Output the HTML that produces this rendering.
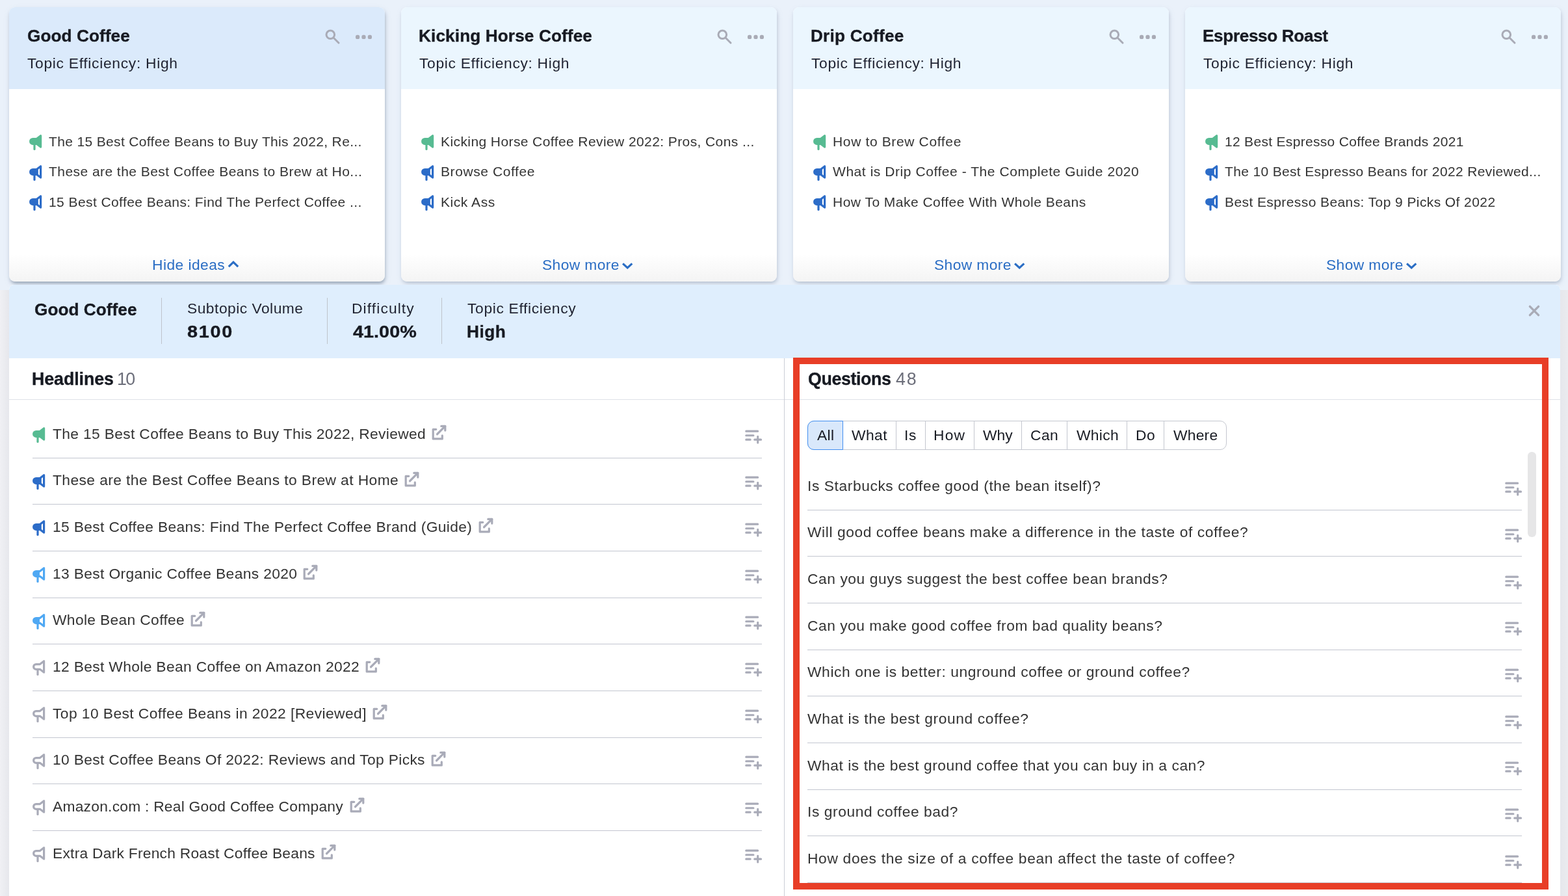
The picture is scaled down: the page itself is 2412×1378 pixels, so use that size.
<!DOCTYPE html>
<html lang="en">
<head>
<meta charset="utf-8">
<title>Topic Research – Good Coffee</title>
<style>
*{box-sizing:border-box;margin:0;padding:0}
html,body{width:2412px;height:1378px;overflow:hidden}
body{position:relative;background:#eaf1fa;font-family:"Liberation Sans",Arial,Helvetica,sans-serif;color:#2d2f38}
ul{list-style:none}
a{text-decoration:none}
.t{position:absolute;white-space:nowrap;line-height:1;font-weight:400;will-change:transform}
.ic{position:absolute;display:block;overflow:visible}
.b{font-weight:700;color:#171a22;-webkit-text-stroke:.35px #171a22}
.pagebg{position:absolute;left:0;top:445.5px;width:2412px;height:932.5px;background:linear-gradient(90deg,#f0f0f4 0,#e6e7ec 14px,#e6e7ec 2400px,#eaebef 2412px)}
.card{position:absolute;top:11px;width:577.6px;height:422px;border-radius:9px;background:linear-gradient(180deg,#fff 0,#fff 90%,#f4f4f4 100%);box-shadow:1px 3px 5px -1px rgba(96,113,138,.30),1px 4px 12px -2px rgba(110,130,160,.20)}
.card.sel{box-shadow:1px 4px 5px -1px rgba(80,100,125,.45),1px 4px 12px -2px rgba(110,130,160,.22)}
.card-head{position:absolute;left:0;top:0;width:100%;height:126px;background:#ebf6fe;border-radius:9px 9px 0 0}
.card.sel .card-head{background:#dbeafb}
.link{color:#2a6dc4}
.panel{position:absolute;left:14px;top:438px;width:2386px;height:940px;background:#fff;border-radius:7px 7px 0 0;overflow:hidden}
.panel-head{position:absolute;left:0;top:0;width:100%;height:112.5px;background:#dfeefd;border-radius:7px 7px 0 0}
.vd{position:absolute;top:19.5px;width:1.4px;height:71px;background:#bfc3cb}
.hline{position:absolute;left:0;top:175.7px;width:100%;height:1.2px;background:#dfe1e8}
.colsep{position:absolute;left:1191.6px;top:112.5px;width:1.2px;height:827.5px;background:#cbced6}
.sep{position:absolute;height:1px;background:#c3c6d0}
.tabs{position:absolute;left:1228px;top:209.3px;height:44.4px;width:644.8px;border:1.2px solid #c4c7cf;border-radius:10px;background:#fff}
.tab{position:absolute;top:-1.2px;height:44.4px;border-left:1.2px solid #c4c7cf}
.tab.on{background:#d9e8fb;border:1.3px solid #428ff0;border-radius:10px 0 0 10px;z-index:2}
.tab .t{color:#171a22}
.scroll{position:absolute;left:2336px;top:257px;width:12.5px;height:131px;border-radius:6.25px;background:#e6e6e7}
.hl{position:absolute;left:1206px;top:112px;width:1162px;height:818px;border:10px solid #e83e27;pointer-events:none}
</style>
</head>
<body>
<div class="pagebg"></div>

<section class="cards">
<article class="card sel" style="left:14px">
<header class="card-head">
<h3 class="t b" style="left:28.36px;top:31px;font-size:26.2px;letter-spacing:0.060px;">Good Coffee</h3>
<span class="t" style="left:28.28px;top:75px;font-size:22.8px;letter-spacing:0.700px;color:#1f2230;">Topic Efficiency: High</span>
<svg class="ic" style="left:486.30px;top:34.40px" width="24" height="24" viewBox="0 0 24 24" fill="none" stroke="#a9abb6" stroke-width="3" stroke-linecap="round"><circle cx="8.3" cy="8.3" r="6.3"/><path d="M13 13 L21 21"/></svg>
<svg class="ic" style="left:532.80px;top:42.10px" width="26" height="8" viewBox="0 0 26 8" fill="#a9abb6"><rect x="0" y="0.8" width="6.2" height="6.2" rx="2.6"/><rect x="9.4" y="0.8" width="6.2" height="6.2" rx="2.6"/><rect x="18.8" y="0.8" width="6.2" height="6.2" rx="2.6"/></svg>
</header>
<ul>
<li><svg class="ic" style="left:30.70px;top:196.10px" width="20" height="25" viewBox="0 0 20 25" stroke="#57bb92" stroke-width="3.2" stroke-linejoin="round" stroke-linecap="round"><path d="M11.4 6.6 L17.6 1.8 L17.6 19.1 L11.4 14.3 L5.5 14.3 A3.85 3.85 0 0 1 5.5 6.6 Z" fill="#57bb92"/><path d="M8 14.6 V22.5" fill="none"/></svg><span class="t" style="left:61.40px;top:196px;font-size:21.0px;letter-spacing:0.348px;color:#333;">The 15 Best Coffee Beans to Buy This 2022, Re...</span></li>
<li><svg class="ic" style="left:30.70px;top:242.60px" width="20" height="25" viewBox="0 0 20 25" stroke="#2c6cc8" stroke-width="3.2" stroke-linejoin="round" stroke-linecap="round"><path d="M11.4 6.6 L17.6 1.8 L17.6 19.1 L11.4 14.3 L5.5 14.3 A3.85 3.85 0 0 1 5.5 6.6 Z" fill="none"/><path d="M5.5 6.6 H11.4 L13.8 4.8 V16.1 L11.4 14.3 H5.5 A3.85 3.85 0 0 1 5.5 6.6 Z" fill="#2c6cc8" stroke="none"/><path d="M8 14.6 V22.5" fill="none"/></svg><span class="t" style="left:61.40px;top:242px;font-size:21.0px;letter-spacing:0.448px;color:#333;">These are the Best Coffee Beans to Brew at Ho...</span></li>
<li><svg class="ic" style="left:30.70px;top:289.20px" width="20" height="25" viewBox="0 0 20 25" stroke="#2c6cc8" stroke-width="3.2" stroke-linejoin="round" stroke-linecap="round"><path d="M11.4 6.6 L17.6 1.8 L17.6 19.1 L11.4 14.3 L5.5 14.3 A3.85 3.85 0 0 1 5.5 6.6 Z" fill="none"/><path d="M5.5 6.6 H11.4 L13.8 4.8 V16.1 L11.4 14.3 H5.5 A3.85 3.85 0 0 1 5.5 6.6 Z" fill="#2c6cc8" stroke="none"/><path d="M8 14.6 V22.5" fill="none"/></svg><span class="t" style="left:61.40px;top:289px;font-size:21.0px;letter-spacing:0.420px;color:#333;">15 Best Coffee Beans: Find The Perfect Coffee ...</span></li>
</ul>
<a class="t link" style="left:220.00px;top:385px;font-size:22.8px;letter-spacing:0.444px;">Hide ideas</a>
<svg class="ic" style="left:336.00px;top:389.00px" width="18" height="13" viewBox="0 0 18 13" fill="none" stroke="#2a6dc4" stroke-width="3.2" stroke-linecap="butt" stroke-linejoin="miter"><path d="M1.8 10.1 L8.97 3.2 L16.15 10.1"/></svg>
</article>
<article class="card" style="left:617px">
<header class="card-head">
<h3 class="t b" style="left:26.86px;top:31px;font-size:26.2px;letter-spacing:0.108px;">Kicking Horse Coffee</h3>
<span class="t" style="left:28.28px;top:75px;font-size:22.8px;letter-spacing:0.681px;color:#1f2230;">Topic Efficiency: High</span>
<svg class="ic" style="left:486.30px;top:34.40px" width="24" height="24" viewBox="0 0 24 24" fill="none" stroke="#a9abb6" stroke-width="3" stroke-linecap="round"><circle cx="8.3" cy="8.3" r="6.3"/><path d="M13 13 L21 21"/></svg>
<svg class="ic" style="left:532.80px;top:42.10px" width="26" height="8" viewBox="0 0 26 8" fill="#a9abb6"><rect x="0" y="0.8" width="6.2" height="6.2" rx="2.6"/><rect x="9.4" y="0.8" width="6.2" height="6.2" rx="2.6"/><rect x="18.8" y="0.8" width="6.2" height="6.2" rx="2.6"/></svg>
</header>
<ul>
<li><svg class="ic" style="left:30.70px;top:196.10px" width="20" height="25" viewBox="0 0 20 25" stroke="#57bb92" stroke-width="3.2" stroke-linejoin="round" stroke-linecap="round"><path d="M11.4 6.6 L17.6 1.8 L17.6 19.1 L11.4 14.3 L5.5 14.3 A3.85 3.85 0 0 1 5.5 6.6 Z" fill="#57bb92"/><path d="M8 14.6 V22.5" fill="none"/></svg><span class="t" style="left:61.40px;top:196px;font-size:21.0px;letter-spacing:0.410px;color:#333;">Kicking Horse Coffee Review 2022: Pros, Cons ...</span></li>
<li><svg class="ic" style="left:30.70px;top:242.60px" width="20" height="25" viewBox="0 0 20 25" stroke="#2c6cc8" stroke-width="3.2" stroke-linejoin="round" stroke-linecap="round"><path d="M11.4 6.6 L17.6 1.8 L17.6 19.1 L11.4 14.3 L5.5 14.3 A3.85 3.85 0 0 1 5.5 6.6 Z" fill="none"/><path d="M5.5 6.6 H11.4 L13.8 4.8 V16.1 L11.4 14.3 H5.5 A3.85 3.85 0 0 1 5.5 6.6 Z" fill="#2c6cc8" stroke="none"/><path d="M8 14.6 V22.5" fill="none"/></svg><span class="t" style="left:61.40px;top:242px;font-size:21.0px;letter-spacing:0.581px;color:#333;">Browse Coffee</span></li>
<li><svg class="ic" style="left:30.70px;top:289.20px" width="20" height="25" viewBox="0 0 20 25" stroke="#2c6cc8" stroke-width="3.2" stroke-linejoin="round" stroke-linecap="round"><path d="M11.4 6.6 L17.6 1.8 L17.6 19.1 L11.4 14.3 L5.5 14.3 A3.85 3.85 0 0 1 5.5 6.6 Z" fill="none"/><path d="M5.5 6.6 H11.4 L13.8 4.8 V16.1 L11.4 14.3 H5.5 A3.85 3.85 0 0 1 5.5 6.6 Z" fill="#2c6cc8" stroke="none"/><path d="M8 14.6 V22.5" fill="none"/></svg><span class="t" style="left:61.40px;top:289px;font-size:21.0px;letter-spacing:0.547px;color:#333;">Kick Ass</span></li>
</ul>
<a class="t link" style="left:217.08px;top:385px;font-size:22.8px;letter-spacing:0.396px;">Show more</a>
<svg class="ic" style="left:338.70px;top:392.00px" width="18" height="13" viewBox="0 0 18 13" fill="none" stroke="#2a6dc4" stroke-width="3.2" stroke-linecap="butt" stroke-linejoin="miter"><path d="M2.1 2.4 L9.2 8.9 L16.3 2.4"/></svg>
</article>
<article class="card" style="left:1220px">
<header class="card-head">
<h3 class="t b" style="left:26.86px;top:31px;font-size:26.2px;letter-spacing:0.209px;">Drip Coffee</h3>
<span class="t" style="left:28.28px;top:75px;font-size:22.8px;letter-spacing:0.681px;color:#1f2230;">Topic Efficiency: High</span>
<svg class="ic" style="left:486.30px;top:34.40px" width="24" height="24" viewBox="0 0 24 24" fill="none" stroke="#a9abb6" stroke-width="3" stroke-linecap="round"><circle cx="8.3" cy="8.3" r="6.3"/><path d="M13 13 L21 21"/></svg>
<svg class="ic" style="left:532.80px;top:42.10px" width="26" height="8" viewBox="0 0 26 8" fill="#a9abb6"><rect x="0" y="0.8" width="6.2" height="6.2" rx="2.6"/><rect x="9.4" y="0.8" width="6.2" height="6.2" rx="2.6"/><rect x="18.8" y="0.8" width="6.2" height="6.2" rx="2.6"/></svg>
</header>
<ul>
<li><svg class="ic" style="left:30.70px;top:196.10px" width="20" height="25" viewBox="0 0 20 25" stroke="#57bb92" stroke-width="3.2" stroke-linejoin="round" stroke-linecap="round"><path d="M11.4 6.6 L17.6 1.8 L17.6 19.1 L11.4 14.3 L5.5 14.3 A3.85 3.85 0 0 1 5.5 6.6 Z" fill="#57bb92"/><path d="M8 14.6 V22.5" fill="none"/></svg><span class="t" style="left:61.40px;top:196px;font-size:21.0px;letter-spacing:0.646px;color:#333;">How to Brew Coffee</span></li>
<li><svg class="ic" style="left:30.70px;top:242.60px" width="20" height="25" viewBox="0 0 20 25" stroke="#2c6cc8" stroke-width="3.2" stroke-linejoin="round" stroke-linecap="round"><path d="M11.4 6.6 L17.6 1.8 L17.6 19.1 L11.4 14.3 L5.5 14.3 A3.85 3.85 0 0 1 5.5 6.6 Z" fill="none"/><path d="M5.5 6.6 H11.4 L13.8 4.8 V16.1 L11.4 14.3 H5.5 A3.85 3.85 0 0 1 5.5 6.6 Z" fill="#2c6cc8" stroke="none"/><path d="M8 14.6 V22.5" fill="none"/></svg><span class="t" style="left:61.40px;top:242px;font-size:21.0px;letter-spacing:0.557px;color:#333;">What is Drip Coffee - The Complete Guide 2020</span></li>
<li><svg class="ic" style="left:30.70px;top:289.20px" width="20" height="25" viewBox="0 0 20 25" stroke="#2c6cc8" stroke-width="3.2" stroke-linejoin="round" stroke-linecap="round"><path d="M11.4 6.6 L17.6 1.8 L17.6 19.1 L11.4 14.3 L5.5 14.3 A3.85 3.85 0 0 1 5.5 6.6 Z" fill="none"/><path d="M5.5 6.6 H11.4 L13.8 4.8 V16.1 L11.4 14.3 H5.5 A3.85 3.85 0 0 1 5.5 6.6 Z" fill="#2c6cc8" stroke="none"/><path d="M8 14.6 V22.5" fill="none"/></svg><span class="t" style="left:61.40px;top:289px;font-size:21.0px;letter-spacing:0.483px;color:#333;">How To Make Coffee With Whole Beans</span></li>
</ul>
<a class="t link" style="left:217.16px;top:385px;font-size:22.8px;letter-spacing:0.390px;">Show more</a>
<svg class="ic" style="left:338.70px;top:392.00px" width="18" height="13" viewBox="0 0 18 13" fill="none" stroke="#2a6dc4" stroke-width="3.2" stroke-linecap="butt" stroke-linejoin="miter"><path d="M2.1 2.4 L9.2 8.9 L16.3 2.4"/></svg>
</article>
<article class="card" style="left:1823px">
<header class="card-head">
<h3 class="t b" style="left:27.26px;top:31px;font-size:26.2px;letter-spacing:-0.375px;">Espresso Roast</h3>
<span class="t" style="left:28.28px;top:75px;font-size:22.8px;letter-spacing:0.681px;color:#1f2230;">Topic Efficiency: High</span>
<svg class="ic" style="left:486.30px;top:34.40px" width="24" height="24" viewBox="0 0 24 24" fill="none" stroke="#a9abb6" stroke-width="3" stroke-linecap="round"><circle cx="8.3" cy="8.3" r="6.3"/><path d="M13 13 L21 21"/></svg>
<svg class="ic" style="left:532.80px;top:42.10px" width="26" height="8" viewBox="0 0 26 8" fill="#a9abb6"><rect x="0" y="0.8" width="6.2" height="6.2" rx="2.6"/><rect x="9.4" y="0.8" width="6.2" height="6.2" rx="2.6"/><rect x="18.8" y="0.8" width="6.2" height="6.2" rx="2.6"/></svg>
</header>
<ul>
<li><svg class="ic" style="left:30.70px;top:196.10px" width="20" height="25" viewBox="0 0 20 25" stroke="#57bb92" stroke-width="3.2" stroke-linejoin="round" stroke-linecap="round"><path d="M11.4 6.6 L17.6 1.8 L17.6 19.1 L11.4 14.3 L5.5 14.3 A3.85 3.85 0 0 1 5.5 6.6 Z" fill="#57bb92"/><path d="M8 14.6 V22.5" fill="none"/></svg><span class="t" style="left:61.40px;top:196px;font-size:21.0px;letter-spacing:0.309px;color:#333;">12 Best Espresso Coffee Brands 2021</span></li>
<li><svg class="ic" style="left:30.70px;top:242.60px" width="20" height="25" viewBox="0 0 20 25" stroke="#2c6cc8" stroke-width="3.2" stroke-linejoin="round" stroke-linecap="round"><path d="M11.4 6.6 L17.6 1.8 L17.6 19.1 L11.4 14.3 L5.5 14.3 A3.85 3.85 0 0 1 5.5 6.6 Z" fill="none"/><path d="M5.5 6.6 H11.4 L13.8 4.8 V16.1 L11.4 14.3 H5.5 A3.85 3.85 0 0 1 5.5 6.6 Z" fill="#2c6cc8" stroke="none"/><path d="M8 14.6 V22.5" fill="none"/></svg><span class="t" style="left:61.40px;top:242px;font-size:21.0px;letter-spacing:0.345px;color:#333;">The 10 Best Espresso Beans for 2022 Reviewed...</span></li>
<li><svg class="ic" style="left:30.70px;top:289.20px" width="20" height="25" viewBox="0 0 20 25" stroke="#2c6cc8" stroke-width="3.2" stroke-linejoin="round" stroke-linecap="round"><path d="M11.4 6.6 L17.6 1.8 L17.6 19.1 L11.4 14.3 L5.5 14.3 A3.85 3.85 0 0 1 5.5 6.6 Z" fill="none"/><path d="M5.5 6.6 H11.4 L13.8 4.8 V16.1 L11.4 14.3 H5.5 A3.85 3.85 0 0 1 5.5 6.6 Z" fill="#2c6cc8" stroke="none"/><path d="M8 14.6 V22.5" fill="none"/></svg><span class="t" style="left:61.40px;top:289px;font-size:21.0px;letter-spacing:0.412px;color:#333;">Best Espresso Beans: Top 9 Picks Of 2022</span></li>
</ul>
<a class="t link" style="left:217.08px;top:385px;font-size:22.8px;letter-spacing:0.396px;">Show more</a>
<svg class="ic" style="left:338.70px;top:392.00px" width="18" height="13" viewBox="0 0 18 13" fill="none" stroke="#2a6dc4" stroke-width="3.2" stroke-linecap="butt" stroke-linejoin="miter"><path d="M2.1 2.4 L9.2 8.9 L16.3 2.4"/></svg>
</article>
</section>
<section class="panel">
<header class="panel-head">
<h2 class="t b" style="left:39.44px;top:25px;font-size:26.2px;letter-spacing:0.041px;">Good Coffee</h2>
<i class="vd" style="left:233.5px"></i>
<i class="vd" style="left:488.7px"></i>
<i class="vd" style="left:665.1px"></i>
<span class="t" style="left:273.60px;top:25px;font-size:22.8px;letter-spacing:0.495px;color:#1f2230;">Subtopic Volume</span>
<span class="t b" style="left:273.66px;top:59px;font-size:26.2px;letter-spacing:1.576px;transform:scaleX(1.1);transform-origin:0 0;">8100</span>
<span class="t" style="left:527.16px;top:25px;font-size:22.8px;letter-spacing:1.106px;color:#1f2230;">Difficulty</span>
<span class="t b" style="left:529.14px;top:59px;font-size:26.2px;letter-spacing:0.014px;transform:scaleX(1.1);transform-origin:0 0;">41.00%</span>
<span class="t" style="left:705.28px;top:25px;font-size:22.8px;letter-spacing:0.660px;color:#1f2230;">Topic Efficiency</span>
<span class="t b" style="left:704.12px;top:59px;font-size:26.2px;letter-spacing:0.517px;">High</span>
<svg class="ic" style="left:2337.2px;top:31px" width="18" height="18" viewBox="0 0 18 18" fill="none" stroke="#a9abb6" stroke-width="3.4" stroke-linecap="round"><path d="M2.4 2.4 L15.6 15.6 M15.6 2.4 L2.4 15.6"/></svg>
</header>
<div class="col col-headlines">
<h3 class="t b" style="left:35.08px;top:132px;font-size:26.8px;letter-spacing:-0.085px;">Headlines</h3>
<span class="t" style="left:165.91px;top:132px;font-size:26.8px;letter-spacing:-1.743px;color:#6c6e7a;">10</span>
<ul>
<li><svg class="ic" style="left:35.90px;top:218.90px" width="20" height="25" viewBox="0 0 20 25" stroke="#57bb92" stroke-width="3.2" stroke-linejoin="round" stroke-linecap="round"><path d="M11.4 6.6 L17.6 1.8 L17.6 19.1 L11.4 14.3 L5.5 14.3 A3.85 3.85 0 0 1 5.5 6.6 Z" fill="#57bb92"/><path d="M8 14.6 V22.5" fill="none"/></svg><span class="t" style="left:66.50px;top:218px;font-size:22.8px;letter-spacing:0.340px;color:#333;">The 15 Best Coffee Beans to Buy This 2022, Reviewed</span><svg class="ic" style="left:649.70px;top:215.05px" width="24" height="24" viewBox="0 0 24 24" fill="none" stroke="#a9abb8" stroke-width="3.2" stroke-linecap="round" stroke-linejoin="round"><path d="M6.8 7.3 H2.2 V21.9 H16.3 V16.9"/><path d="M8.5 14.75 L20.8 2.45"/><path d="M14.8 2.45 H20.8 V9.1"/></svg><svg class="ic" style="left:1129.80px;top:222.70px" width="30" height="24" viewBox="0 0 30 24" fill="none" stroke="#a9abb8" stroke-width="3.1" stroke-linecap="round"><path d="M3.75 2.16 H21.65 M3.75 8.69 H14.95 M3.75 15.13 H10.15 M16.75 15.13 H26.55 M21.7 10.25 V19.95"/></svg><i class="sep" style="left:36px;width:1122px;top:266px"></i></li>
<li><svg class="ic" style="left:35.90px;top:290.57px" width="20" height="25" viewBox="0 0 20 25" stroke="#2c6cc8" stroke-width="3.2" stroke-linejoin="round" stroke-linecap="round"><path d="M11.4 6.6 L17.6 1.8 L17.6 19.1 L11.4 14.3 L5.5 14.3 A3.85 3.85 0 0 1 5.5 6.6 Z" fill="none"/><path d="M5.5 6.6 H11.4 L13.8 4.8 V16.1 L11.4 14.3 H5.5 A3.85 3.85 0 0 1 5.5 6.6 Z" fill="#2c6cc8" stroke="none"/><path d="M8 14.6 V22.5" fill="none"/></svg><span class="t" style="left:66.50px;top:289px;font-size:22.8px;letter-spacing:0.412px;color:#333;">These are the Best Coffee Beans to Brew at Home</span><svg class="ic" style="left:607.60px;top:286.72px" width="24" height="24" viewBox="0 0 24 24" fill="none" stroke="#a9abb8" stroke-width="3.2" stroke-linecap="round" stroke-linejoin="round"><path d="M6.8 7.3 H2.2 V21.9 H16.3 V16.9"/><path d="M8.5 14.75 L20.8 2.45"/><path d="M14.8 2.45 H20.8 V9.1"/></svg><svg class="ic" style="left:1129.80px;top:294.37px" width="30" height="24" viewBox="0 0 30 24" fill="none" stroke="#a9abb8" stroke-width="3.1" stroke-linecap="round"><path d="M3.75 2.16 H21.65 M3.75 8.69 H14.95 M3.75 15.13 H10.15 M16.75 15.13 H26.55 M21.7 10.25 V19.95"/></svg><i class="sep" style="left:36px;width:1122px;top:337px"></i></li>
<li><svg class="ic" style="left:35.90px;top:362.23px" width="20" height="25" viewBox="0 0 20 25" stroke="#2c6cc8" stroke-width="3.2" stroke-linejoin="round" stroke-linecap="round"><path d="M11.4 6.6 L17.6 1.8 L17.6 19.1 L11.4 14.3 L5.5 14.3 A3.85 3.85 0 0 1 5.5 6.6 Z" fill="none"/><path d="M5.5 6.6 H11.4 L13.8 4.8 V16.1 L11.4 14.3 H5.5 A3.85 3.85 0 0 1 5.5 6.6 Z" fill="#2c6cc8" stroke="none"/><path d="M8 14.6 V22.5" fill="none"/></svg><span class="t" style="left:66.50px;top:361px;font-size:22.8px;letter-spacing:0.348px;color:#333;">15 Best Coffee Beans: Find The Perfect Coffee Brand (Guide)</span><svg class="ic" style="left:721.70px;top:358.38px" width="24" height="24" viewBox="0 0 24 24" fill="none" stroke="#a9abb8" stroke-width="3.2" stroke-linecap="round" stroke-linejoin="round"><path d="M6.8 7.3 H2.2 V21.9 H16.3 V16.9"/><path d="M8.5 14.75 L20.8 2.45"/><path d="M14.8 2.45 H20.8 V9.1"/></svg><svg class="ic" style="left:1129.80px;top:366.03px" width="30" height="24" viewBox="0 0 30 24" fill="none" stroke="#a9abb8" stroke-width="3.1" stroke-linecap="round"><path d="M3.75 2.16 H21.65 M3.75 8.69 H14.95 M3.75 15.13 H10.15 M16.75 15.13 H26.55 M21.7 10.25 V19.95"/></svg><i class="sep" style="left:36px;width:1122px;top:409px"></i></li>
<li><svg class="ic" style="left:35.90px;top:433.90px" width="20" height="25" viewBox="0 0 20 25" stroke="#4fa8f3" stroke-width="3.2" stroke-linejoin="round" stroke-linecap="round"><path d="M11.4 6.6 L17.6 1.8 L17.6 19.1 L11.4 14.3 L5.5 14.3 A3.85 3.85 0 0 1 5.5 6.6 Z" fill="none"/><path d="M5.5 6.6 H11 V14.3 H5.5 A3.85 3.85 0 0 1 5.5 6.6 Z" fill="#4fa8f3" stroke="none"/><path d="M8 14.6 V22.5" fill="none"/></svg><span class="t" style="left:66.50px;top:433px;font-size:22.8px;letter-spacing:0.355px;color:#333;">13 Best Organic Coffee Beans 2020</span><svg class="ic" style="left:452.05px;top:430.05px" width="24" height="24" viewBox="0 0 24 24" fill="none" stroke="#a9abb8" stroke-width="3.2" stroke-linecap="round" stroke-linejoin="round"><path d="M6.8 7.3 H2.2 V21.9 H16.3 V16.9"/><path d="M8.5 14.75 L20.8 2.45"/><path d="M14.8 2.45 H20.8 V9.1"/></svg><svg class="ic" style="left:1129.80px;top:437.70px" width="30" height="24" viewBox="0 0 30 24" fill="none" stroke="#a9abb8" stroke-width="3.1" stroke-linecap="round"><path d="M3.75 2.16 H21.65 M3.75 8.69 H14.95 M3.75 15.13 H10.15 M16.75 15.13 H26.55 M21.7 10.25 V19.95"/></svg><i class="sep" style="left:36px;width:1122px;top:481px"></i></li>
<li><svg class="ic" style="left:35.90px;top:505.57px" width="20" height="25" viewBox="0 0 20 25" stroke="#4fa8f3" stroke-width="3.2" stroke-linejoin="round" stroke-linecap="round"><path d="M11.4 6.6 L17.6 1.8 L17.6 19.1 L11.4 14.3 L5.5 14.3 A3.85 3.85 0 0 1 5.5 6.6 Z" fill="none"/><path d="M5.5 6.6 H11 V14.3 H5.5 A3.85 3.85 0 0 1 5.5 6.6 Z" fill="#4fa8f3" stroke="none"/><path d="M8 14.6 V22.5" fill="none"/></svg><span class="t" style="left:66.50px;top:504px;font-size:22.8px;letter-spacing:0.343px;color:#333;">Whole Bean Coffee</span><svg class="ic" style="left:279.10px;top:501.72px" width="24" height="24" viewBox="0 0 24 24" fill="none" stroke="#a9abb8" stroke-width="3.2" stroke-linecap="round" stroke-linejoin="round"><path d="M6.8 7.3 H2.2 V21.9 H16.3 V16.9"/><path d="M8.5 14.75 L20.8 2.45"/><path d="M14.8 2.45 H20.8 V9.1"/></svg><svg class="ic" style="left:1129.80px;top:509.37px" width="30" height="24" viewBox="0 0 30 24" fill="none" stroke="#a9abb8" stroke-width="3.1" stroke-linecap="round"><path d="M3.75 2.16 H21.65 M3.75 8.69 H14.95 M3.75 15.13 H10.15 M16.75 15.13 H26.55 M21.7 10.25 V19.95"/></svg><i class="sep" style="left:36px;width:1122px;top:552px"></i></li>
<li><svg class="ic" style="left:35.90px;top:577.23px" width="20" height="25" viewBox="0 0 20 25" stroke="#a9abb8" stroke-width="3.2" stroke-linejoin="round" stroke-linecap="round"><path d="M11.4 6.6 L17.6 1.8 L17.6 19.1 L11.4 14.3 L5.5 14.3 A3.85 3.85 0 0 1 5.5 6.6 Z" fill="none"/><path d="M8 14.6 V22.5" fill="none"/></svg><span class="t" style="left:66.50px;top:576px;font-size:22.8px;letter-spacing:0.340px;color:#333;">12 Best Whole Bean Coffee on Amazon 2022</span><svg class="ic" style="left:548.15px;top:573.38px" width="24" height="24" viewBox="0 0 24 24" fill="none" stroke="#a9abb8" stroke-width="3.2" stroke-linecap="round" stroke-linejoin="round"><path d="M6.8 7.3 H2.2 V21.9 H16.3 V16.9"/><path d="M8.5 14.75 L20.8 2.45"/><path d="M14.8 2.45 H20.8 V9.1"/></svg><svg class="ic" style="left:1129.80px;top:581.03px" width="30" height="24" viewBox="0 0 30 24" fill="none" stroke="#a9abb8" stroke-width="3.1" stroke-linecap="round"><path d="M3.75 2.16 H21.65 M3.75 8.69 H14.95 M3.75 15.13 H10.15 M16.75 15.13 H26.55 M21.7 10.25 V19.95"/></svg><i class="sep" style="left:36px;width:1122px;top:624px"></i></li>
<li><svg class="ic" style="left:35.90px;top:648.90px" width="20" height="25" viewBox="0 0 20 25" stroke="#a9abb8" stroke-width="3.2" stroke-linejoin="round" stroke-linecap="round"><path d="M11.4 6.6 L17.6 1.8 L17.6 19.1 L11.4 14.3 L5.5 14.3 A3.85 3.85 0 0 1 5.5 6.6 Z" fill="none"/><path d="M8 14.6 V22.5" fill="none"/></svg><span class="t" style="left:66.50px;top:648px;font-size:22.8px;letter-spacing:0.425px;color:#333;">Top 10 Best Coffee Beans in 2022 [Reviewed]</span><svg class="ic" style="left:558.90px;top:645.05px" width="24" height="24" viewBox="0 0 24 24" fill="none" stroke="#a9abb8" stroke-width="3.2" stroke-linecap="round" stroke-linejoin="round"><path d="M6.8 7.3 H2.2 V21.9 H16.3 V16.9"/><path d="M8.5 14.75 L20.8 2.45"/><path d="M14.8 2.45 H20.8 V9.1"/></svg><svg class="ic" style="left:1129.80px;top:652.70px" width="30" height="24" viewBox="0 0 30 24" fill="none" stroke="#a9abb8" stroke-width="3.1" stroke-linecap="round"><path d="M3.75 2.16 H21.65 M3.75 8.69 H14.95 M3.75 15.13 H10.15 M16.75 15.13 H26.55 M21.7 10.25 V19.95"/></svg><i class="sep" style="left:36px;width:1122px;top:696px"></i></li>
<li><svg class="ic" style="left:35.90px;top:720.57px" width="20" height="25" viewBox="0 0 20 25" stroke="#a9abb8" stroke-width="3.2" stroke-linejoin="round" stroke-linecap="round"><path d="M11.4 6.6 L17.6 1.8 L17.6 19.1 L11.4 14.3 L5.5 14.3 A3.85 3.85 0 0 1 5.5 6.6 Z" fill="none"/><path d="M8 14.6 V22.5" fill="none"/></svg><span class="t" style="left:66.50px;top:719px;font-size:22.8px;letter-spacing:0.341px;color:#333;">10 Best Coffee Beans Of 2022: Reviews and Top Picks</span><svg class="ic" style="left:648.90px;top:716.72px" width="24" height="24" viewBox="0 0 24 24" fill="none" stroke="#a9abb8" stroke-width="3.2" stroke-linecap="round" stroke-linejoin="round"><path d="M6.8 7.3 H2.2 V21.9 H16.3 V16.9"/><path d="M8.5 14.75 L20.8 2.45"/><path d="M14.8 2.45 H20.8 V9.1"/></svg><svg class="ic" style="left:1129.80px;top:724.37px" width="30" height="24" viewBox="0 0 30 24" fill="none" stroke="#a9abb8" stroke-width="3.1" stroke-linecap="round"><path d="M3.75 2.16 H21.65 M3.75 8.69 H14.95 M3.75 15.13 H10.15 M16.75 15.13 H26.55 M21.7 10.25 V19.95"/></svg><i class="sep" style="left:36px;width:1122px;top:767px"></i></li>
<li><svg class="ic" style="left:35.90px;top:792.24px" width="20" height="25" viewBox="0 0 20 25" stroke="#a9abb8" stroke-width="3.2" stroke-linejoin="round" stroke-linecap="round"><path d="M11.4 6.6 L17.6 1.8 L17.6 19.1 L11.4 14.3 L5.5 14.3 A3.85 3.85 0 0 1 5.5 6.6 Z" fill="none"/><path d="M8 14.6 V22.5" fill="none"/></svg><span class="t" style="left:66.50px;top:791px;font-size:22.8px;letter-spacing:0.239px;color:#333;">Amazon.com : Real Good Coffee Company</span><svg class="ic" style="left:523.80px;top:788.39px" width="24" height="24" viewBox="0 0 24 24" fill="none" stroke="#a9abb8" stroke-width="3.2" stroke-linecap="round" stroke-linejoin="round"><path d="M6.8 7.3 H2.2 V21.9 H16.3 V16.9"/><path d="M8.5 14.75 L20.8 2.45"/><path d="M14.8 2.45 H20.8 V9.1"/></svg><svg class="ic" style="left:1129.80px;top:796.04px" width="30" height="24" viewBox="0 0 30 24" fill="none" stroke="#a9abb8" stroke-width="3.1" stroke-linecap="round"><path d="M3.75 2.16 H21.65 M3.75 8.69 H14.95 M3.75 15.13 H10.15 M16.75 15.13 H26.55 M21.7 10.25 V19.95"/></svg><i class="sep" style="left:36px;width:1122px;top:839px"></i></li>
<li><svg class="ic" style="left:35.90px;top:863.90px" width="20" height="25" viewBox="0 0 20 25" stroke="#a9abb8" stroke-width="3.2" stroke-linejoin="round" stroke-linecap="round"><path d="M11.4 6.6 L17.6 1.8 L17.6 19.1 L11.4 14.3 L5.5 14.3 A3.85 3.85 0 0 1 5.5 6.6 Z" fill="none"/><path d="M8 14.6 V22.5" fill="none"/></svg><span class="t" style="left:66.50px;top:863px;font-size:22.8px;letter-spacing:0.246px;color:#333;">Extra Dark French Roast Coffee Beans</span><svg class="ic" style="left:479.80px;top:860.05px" width="24" height="24" viewBox="0 0 24 24" fill="none" stroke="#a9abb8" stroke-width="3.2" stroke-linecap="round" stroke-linejoin="round"><path d="M6.8 7.3 H2.2 V21.9 H16.3 V16.9"/><path d="M8.5 14.75 L20.8 2.45"/><path d="M14.8 2.45 H20.8 V9.1"/></svg><svg class="ic" style="left:1129.80px;top:867.70px" width="30" height="24" viewBox="0 0 30 24" fill="none" stroke="#a9abb8" stroke-width="3.1" stroke-linecap="round"><path d="M3.75 2.16 H21.65 M3.75 8.69 H14.95 M3.75 15.13 H10.15 M16.75 15.13 H26.55 M21.7 10.25 V19.95"/></svg></li>
</ul>
</div>
<div class="col col-questions">
<h3 class="t b" style="left:1228.78px;top:132px;font-size:26.8px;letter-spacing:-0.383px;">Questions</h3>
<span class="t" style="left:1363.92px;top:132px;font-size:26.8px;letter-spacing:1.742px;color:#6c6e7a;">48</span>
<div class="tabs">
<div class="tab on" style="left:-1.2px;width:55.1px"><span class="t" style="left:14.05px;top:9.400000000000091px;font-size:22.8px;letter-spacing:0.380px;">All</span></div>
<div class="tab" style="left:52.7px;width:81.9px"><span class="t" style="left:13.30px;top:10.700000000000045px;font-size:22.8px;letter-spacing:0.425px;">What</span></div>
<div class="tab" style="left:134.6px;width:45.0px"><span class="t" style="left:12.34px;top:10.700000000000045px;font-size:22.8px;letter-spacing:0.558px;">Is</span></div>
<div class="tab" style="left:179.6px;width:75.1px"><span class="t" style="left:12.57px;top:10.700000000000045px;font-size:22.8px;letter-spacing:1.188px;">How</span></div>
<div class="tab" style="left:254.7px;width:73.1px"><span class="t" style="left:13.50px;top:10.700000000000045px;font-size:22.8px;letter-spacing:-0.018px;">Why</span></div>
<div class="tab" style="left:327.8px;width:69.7px"><span class="t" style="left:13.23px;top:10.700000000000045px;font-size:22.8px;letter-spacing:0.422px;">Can</span></div>
<div class="tab" style="left:397.5px;width:92.4px"><span class="t" style="left:14.73px;top:10.700000000000045px;font-size:22.8px;letter-spacing:0.319px;">Which</span></div>
<div class="tab" style="left:489.9px;width:57.1px"><span class="t" style="left:13.41px;top:10.700000000000045px;font-size:22.8px;letter-spacing:0.482px;">Do</span></div>
<div class="tab" style="left:547.0px;width:96.0px"><span class="t" style="left:13.73px;top:10.700000000000045px;font-size:22.8px;letter-spacing:0.230px;">Where</span></div>
</div>
<ul>
<li><span class="t" style="left:1228.10px;top:298px;font-size:22.8px;letter-spacing:0.576px;color:#333;">Is Starbucks coffee good (the bean itself)?</span><svg class="ic" style="left:2299.10px;top:303.20px" width="30" height="24" viewBox="0 0 30 24" fill="none" stroke="#a9abb8" stroke-width="3.1" stroke-linecap="round"><path d="M3.75 2.16 H21.65 M3.75 8.69 H14.95 M3.75 15.13 H10.15 M16.75 15.13 H26.55 M21.7 10.25 V19.95"/></svg><i class="sep" style="left:1228px;width:1099px;top:346px"></i></li>
<li><span class="t" style="left:1228.10px;top:369px;font-size:22.8px;letter-spacing:0.577px;color:#333;">Will good coffee beans make a difference in the taste of coffee?</span><svg class="ic" style="left:2299.10px;top:374.90px" width="30" height="24" viewBox="0 0 30 24" fill="none" stroke="#a9abb8" stroke-width="3.1" stroke-linecap="round"><path d="M3.75 2.16 H21.65 M3.75 8.69 H14.95 M3.75 15.13 H10.15 M16.75 15.13 H26.55 M21.7 10.25 V19.95"/></svg><i class="sep" style="left:1228px;width:1099px;top:417px"></i></li>
<li><span class="t" style="left:1228.10px;top:441px;font-size:22.8px;letter-spacing:0.564px;color:#333;">Can you guys suggest the best coffee bean brands?</span><svg class="ic" style="left:2299.10px;top:446.60px" width="30" height="24" viewBox="0 0 30 24" fill="none" stroke="#a9abb8" stroke-width="3.1" stroke-linecap="round"><path d="M3.75 2.16 H21.65 M3.75 8.69 H14.95 M3.75 15.13 H10.15 M16.75 15.13 H26.55 M21.7 10.25 V19.95"/></svg><i class="sep" style="left:1228px;width:1099px;top:489px"></i></li>
<li><span class="t" style="left:1228.10px;top:513px;font-size:22.8px;letter-spacing:0.514px;color:#333;">Can you make good coffee from bad quality beans?</span><svg class="ic" style="left:2299.10px;top:518.30px" width="30" height="24" viewBox="0 0 30 24" fill="none" stroke="#a9abb8" stroke-width="3.1" stroke-linecap="round"><path d="M3.75 2.16 H21.65 M3.75 8.69 H14.95 M3.75 15.13 H10.15 M16.75 15.13 H26.55 M21.7 10.25 V19.95"/></svg><i class="sep" style="left:1228px;width:1099px;top:561px"></i></li>
<li><span class="t" style="left:1228.10px;top:584px;font-size:22.8px;letter-spacing:0.593px;color:#333;">Which one is better: unground coffee or ground coffee?</span><svg class="ic" style="left:2299.10px;top:590.00px" width="30" height="24" viewBox="0 0 30 24" fill="none" stroke="#a9abb8" stroke-width="3.1" stroke-linecap="round"><path d="M3.75 2.16 H21.65 M3.75 8.69 H14.95 M3.75 15.13 H10.15 M16.75 15.13 H26.55 M21.7 10.25 V19.95"/></svg><i class="sep" style="left:1228px;width:1099px;top:632px"></i></li>
<li><span class="t" style="left:1228.10px;top:656px;font-size:22.8px;letter-spacing:0.614px;color:#333;">What is the best ground coffee?</span><svg class="ic" style="left:2299.10px;top:661.70px" width="30" height="24" viewBox="0 0 30 24" fill="none" stroke="#a9abb8" stroke-width="3.1" stroke-linecap="round"><path d="M3.75 2.16 H21.65 M3.75 8.69 H14.95 M3.75 15.13 H10.15 M16.75 15.13 H26.55 M21.7 10.25 V19.95"/></svg><i class="sep" style="left:1228px;width:1099px;top:704px"></i></li>
<li><span class="t" style="left:1228.10px;top:728px;font-size:22.8px;letter-spacing:0.540px;color:#333;">What is the best ground coffee that you can buy in a can?</span><svg class="ic" style="left:2299.10px;top:733.40px" width="30" height="24" viewBox="0 0 30 24" fill="none" stroke="#a9abb8" stroke-width="3.1" stroke-linecap="round"><path d="M3.75 2.16 H21.65 M3.75 8.69 H14.95 M3.75 15.13 H10.15 M16.75 15.13 H26.55 M21.7 10.25 V19.95"/></svg><i class="sep" style="left:1228px;width:1099px;top:776px"></i></li>
<li><span class="t" style="left:1228.10px;top:799px;font-size:22.8px;letter-spacing:0.570px;color:#333;">Is ground coffee bad?</span><svg class="ic" style="left:2299.10px;top:805.10px" width="30" height="24" viewBox="0 0 30 24" fill="none" stroke="#a9abb8" stroke-width="3.1" stroke-linecap="round"><path d="M3.75 2.16 H21.65 M3.75 8.69 H14.95 M3.75 15.13 H10.15 M16.75 15.13 H26.55 M21.7 10.25 V19.95"/></svg><i class="sep" style="left:1228px;width:1099px;top:847px"></i></li>
<li><span class="t" style="left:1228.10px;top:871px;font-size:22.8px;letter-spacing:0.661px;color:#333;">How does the size of a coffee bean affect the taste of coffee?</span><svg class="ic" style="left:2299.10px;top:876.80px" width="30" height="24" viewBox="0 0 30 24" fill="none" stroke="#a9abb8" stroke-width="3.1" stroke-linecap="round"><path d="M3.75 2.16 H21.65 M3.75 8.69 H14.95 M3.75 15.13 H10.15 M16.75 15.13 H26.55 M21.7 10.25 V19.95"/></svg><i class="sep" style="left:1228px;width:1099px;top:919px"></i></li>
</ul>
<i class="scroll"></i>
</div>
<i class="hline"></i><i class="colsep"></i>
<div class="hl"></div>
</section>
</body>
</html>
